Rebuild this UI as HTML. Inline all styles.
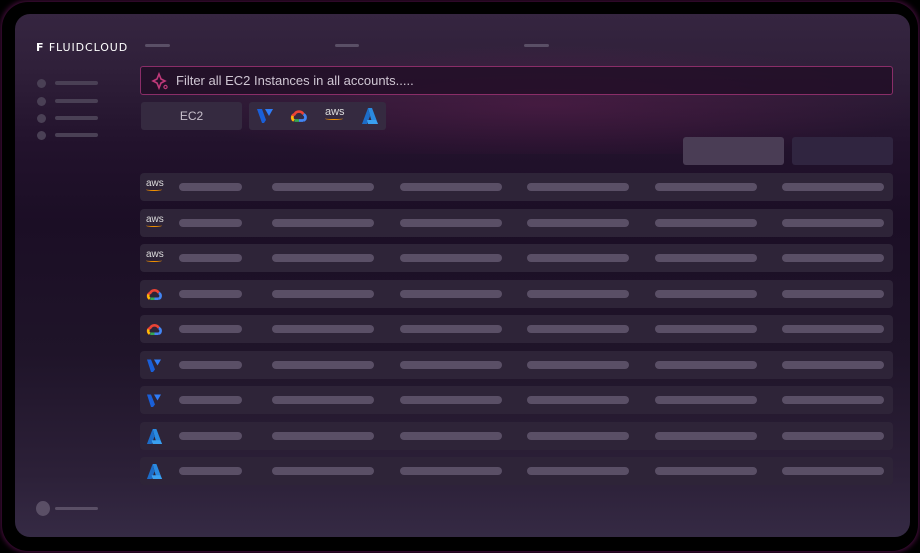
<!DOCTYPE html>
<html><head><style>
*{margin:0;padding:0;box-sizing:border-box}
body{width:920px;height:553px;background:#000;overflow:hidden;position:relative;font-family:"Liberation Sans",sans-serif}
.outer{position:absolute;left:2px;top:2px;width:916px;height:549px;border-radius:26px;box-shadow:0 0 6px 1px rgba(160,30,140,.5)}
.panel{position:absolute;left:15px;top:14px;width:895px;height:523px;border-radius:15px;overflow:hidden;
background:linear-gradient(180deg,#352540 0%,#30203a 10%,#22122c 25%,#1b0e25 40%,#1f1429 65%,#2c2038 88%,#352a44 100%)}
.glow{position:absolute;left:150px;top:30px;width:760px;height:110px;background:radial-gradient(ellipse at 50% 55%,rgba(120,30,90,.35),rgba(0,0,0,0) 70%)}
.abs{position:absolute}
.bar{position:absolute;height:8px;border-radius:4px;background:#5a4f66}
.tb{position:absolute;height:3px;border-radius:2px;background:#5a4f66;top:30px}
.dot{position:absolute;width:9px;height:9px;border-radius:50%;background:#4a4055;left:22px}
.sl{position:absolute;height:4px;border-radius:2px;background:#4a4055;left:40px;width:43px}
.row{position:absolute;left:125px;width:753px;height:28px;border-radius:4px;background:#2e2438}
.row .bar{top:10px}
.ic{position:absolute;left:6px;top:6px;width:17px;height:17px}
</style></head><body>
<div class="outer"></div>
<div class="panel">
<div class="glow"></div>
<div class="abs" style="left:21px;top:27px;color:#fff;font-size:11px;letter-spacing:0.9px;font-family:'DejaVu Sans',sans-serif">
<span style="font-weight:bold">F</span> FLUIDCLOUD</div>
<div class="tb" style="left:130px;width:25px"></div>
<div class="tb" style="left:320px;width:24px"></div>
<div class="tb" style="left:509px;width:25px"></div>
<div class="dot" style="top:65px"></div><div class="sl" style="top:67px"></div>
<div class="dot" style="top:83px"></div><div class="sl" style="top:85px"></div>
<div class="dot" style="top:100px"></div><div class="sl" style="top:102px"></div>
<div class="dot" style="top:117px"></div><div class="sl" style="top:119px"></div>
<div class="abs" style="left:125px;top:52px;width:753px;height:29px;border:1px solid #8a2d68;border-radius:3px;background:rgba(32,14,38,.8)"></div>
<svg class="abs" style="left:136px;top:58px" width="18" height="18" viewBox="0 0 18 18"><path d="M8 2 L10 7 L14 9 L10 11 L8 16 L6 11 L2 9 L6 7Z" fill="none" stroke="#c0397a" stroke-width="1.6"/><circle cx="14.5" cy="15" r="1.6" fill="none" stroke="#c0397a" stroke-width="1.2"/></svg>
<div class="abs" style="left:161px;top:59px;color:#cfc6d3;font-size:13px">Filter all EC2 Instances in all accounts.....</div>
<div class="abs" style="left:126px;top:88px;width:101px;height:28px;border-radius:3px;background:#352a40;color:#c8c0cc;font-size:12px;text-align:center;line-height:28px">EC2</div>
<div class="abs" style="left:234px;top:88px;width:137px;height:28px;border-radius:3px;background:#352a40"></div>
<svg class="abs" style="left:242px;top:94px" width="17" height="16" viewBox="0 0 17 16"><path d="M0 1h5l4 11l-2 3h-2z" fill="#1a5fd8"/><path d="M8 1h8l-4 7z" fill="#2f7cf6"/></svg>
<svg class="abs" style="left:275px;top:93px" width="18" height="18" viewBox="0 0 16 16"><path d="M3.5 12a3 3 0 0 1 0.5-5.5a4.5 4.5 0 0 1 8 0" fill="none" stroke="#ea4335" stroke-width="2.4"/><path d="M12 6.5a3 3 0 0 1 0 5.5" fill="none" stroke="#4285f4" stroke-width="2.4"/><path d="M4 12h4" stroke="#34a853" stroke-width="2.4"/><path d="M8 12h4" stroke="#4285f4" stroke-width="2.4"/><path d="M3.5 12a3 3 0 0 1 -1-4" stroke="#fbbc04" stroke-width="2.4" fill="none"/></svg>
<div class="abs" style="left:310px;top:94px;color:#ddd;font-size:11px;line-height:9px">aws<div style="width:18px;height:3px;border-bottom:1.5px solid #f29100;border-radius:0 0 50% 50%"></div></div>
<svg class="abs" style="left:346px;top:93px" width="18" height="18" viewBox="0 0 18 18"><path d="M7 1h4l6 16h-5l-2-5z" fill="#2a8ae0"/><path d="M7 1l-6 16h5l3-8z" fill="#1c6cc7"/><path d="M6 13h9l2 4h-10z" fill="#3aa0f0"/></svg>
<div class="abs" style="left:668px;top:123px;width:101px;height:28px;border-radius:3px;background:#4a3d55"></div>
<div class="abs" style="left:777px;top:123px;width:101px;height:28px;border-radius:3px;background:#302540"></div>
<div id="rows"></div>
<div class="abs" style="left:21px;top:487px;width:14px;height:15px;border-radius:50%;background:#5a4f66"></div>
<div class="abs" style="left:40px;top:493px;width:43px;height:3px;border-radius:2px;background:#5a4f66"></div>
</div>
<script>
var tops=[159,194.5,230,265.5,301,336.5,372,407.5,443];
var icons=[
'<div class="ic" style="color:#ddd;font-size:10px;line-height:8px;top:7px">aws<div style="width:16px;height:3px;border-bottom:1.5px solid #f29100;border-radius:0 0 50% 50%"></div></div>',
'<svg class="ic" viewBox="0 0 16 16"><path d="M3.5 12a3 3 0 0 1 0.5-5.5a4.5 4.5 0 0 1 8 0" fill="none" stroke="#ea4335" stroke-width="2.4"/><path d="M12 6.5a3 3 0 0 1 0 5.5" fill="none" stroke="#4285f4" stroke-width="2.4"/><path d="M4 12h4" stroke="#34a853" stroke-width="2.4"/><path d="M8 12h4" stroke="#4285f4" stroke-width="2.4"/><path d="M3.5 12a3 3 0 0 1 -1-4" stroke="#fbbc04" stroke-width="2.4" fill="none"/></svg>',
'<svg class="ic" viewBox="0 0 17 16"><path d="M1 2h4l4 10l-2 2.5h-2z" fill="#1a5fd8"/><path d="M8 2h7l-3.5 6z" fill="#2f7cf6"/></svg>',
'<svg class="ic" viewBox="0 0 18 18"><path d="M7 1h4l6 16h-5l-2-5z" fill="#2a8ae0"/><path d="M7 1l-6 16h5l3-8z" fill="#1c6cc7"/><path d="M6 13h9l2 4h-10z" fill="#3aa0f0"/></svg>'];
var kinds=[0,0,0,1,1,2,2,3,3];
var bars=[[39,63],[132,102],[260,102],[387,102],[515,102],[642,102]];
var h='';
tops.forEach(function(t,i){h+='<div class="row" style="top:'+t+'px">'+icons[kinds[i]];
bars.forEach(function(b){h+='<div class="bar" style="left:'+b[0]+'px;width:'+b[1]+'px"></div>'});h+='</div>'});
document.getElementById('rows').innerHTML=h;
</script>
</body></html>
